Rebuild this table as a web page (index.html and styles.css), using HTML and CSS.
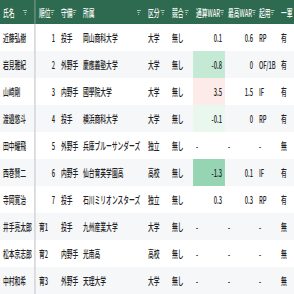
FILE: index.html
```html
<!DOCTYPE html>
<html lang="ja">
<head>
<meta charset="utf-8">
<link rel="stylesheet" href="styles.css">
</head>
<body>
<div class="frame">
<div class="grid">
  <div class="row head">
    <div class="h name"><span>氏名</span><i class="f"></i></div>
    <div class="h"><span>順位</span><i class="f"></i></div>
    <div class="h"><span>守備</span><i class="f"></i></div>
    <div class="h"><span>所属</span><i class="f"></i></div>
    <div class="h"><span>区分</span><i class="f"></i></div>
    <div class="h"><span>競合</span><i class="f"></i></div>
    <div class="h"><span>通算WAR</span><i class="f"></i></div>
    <div class="h"><span>最高WAR</span><i class="f"></i></div>
    <div class="h"><span>起用</span><i class="f"></i></div>
    <div class="h last"><span>一軍</span></div>
  </div>
  <div class="row">
    <div class="c name">近藤弘樹</div><div class="c num">1</div><div class="c">投手</div><div class="c">岡山商科大学</div><div class="c">大学</div><div class="c">無し</div><div class="c num">0.1</div><div class="c num">0.6</div><div class="c">RP</div><div class="c last">有</div>
  </div>
  <div class="row">
    <div class="c name">岩見雅紀</div><div class="c num">2</div><div class="c">外野手</div><div class="c">慶應義塾大学</div><div class="c">大学</div><div class="c">無し</div><div class="c num" style="background:#c4e9d5">-0.8</div><div class="c num">0</div><div class="c">OF/1B</div><div class="c last">有</div>
  </div>
  <div class="row">
    <div class="c name">山崎剛</div><div class="c num">3</div><div class="c">内野手</div><div class="c">國學院大学</div><div class="c">大学</div><div class="c">無し</div><div class="c num" style="background:#fcebe8">3.5</div><div class="c num">1.5</div><div class="c">IF</div><div class="c last">有</div>
  </div>
  <div class="row">
    <div class="c name">渡邉悠斗</div><div class="c num">4</div><div class="c">投手</div><div class="c">横浜商科大学</div><div class="c">大学</div><div class="c">無し</div><div class="c num" style="background:#eaf7ef">-0.1</div><div class="c num">0</div><div class="c">RP</div><div class="c last">有</div>
  </div>
  <div class="row">
    <div class="c name">田中耀飛</div><div class="c num">5</div><div class="c">外野手</div><div class="c">兵庫ブルーサンダーズ</div><div class="c">独立</div><div class="c">無し</div><div class="c">-</div><div class="c">-</div><div class="c">-</div><div class="c last">無</div>
  </div>
  <div class="row">
    <div class="c name">西巻賢二</div><div class="c num">6</div><div class="c">内野手</div><div class="c">仙台育英学園高</div><div class="c">高校</div><div class="c">無し</div><div class="c num" style="background:#95d5b4">-1.3</div><div class="c num">0.1</div><div class="c">IF</div><div class="c last">有</div>
  </div>
  <div class="row">
    <div class="c name">寺岡寛治</div><div class="c num">7</div><div class="c">投手</div><div class="c">石川ミリオンスターズ</div><div class="c">独立</div><div class="c">無し</div><div class="c num">0.3</div><div class="c num">0.3</div><div class="c">RP</div><div class="c last">有</div>
  </div>
  <div class="row">
    <div class="c name">井手亮太郎</div><div class="c">育1</div><div class="c">投手</div><div class="c">九州産業大学</div><div class="c">大学</div><div class="c">無し</div><div class="c">-</div><div class="c">-</div><div class="c">-</div><div class="c last">無</div>
  </div>
  <div class="row">
    <div class="c name">松本京志郎</div><div class="c">育2</div><div class="c">内野手</div><div class="c">光南高</div><div class="c">高校</div><div class="c">無し</div><div class="c">-</div><div class="c">-</div><div class="c">-</div><div class="c last">無</div>
  </div>
  <div class="row">
    <div class="c name">中村和希</div><div class="c">育3</div><div class="c">外野手</div><div class="c">天理大学</div><div class="c">大学</div><div class="c">無し</div><div class="c">-</div><div class="c">-</div><div class="c">-</div><div class="c last">無</div>
  </div>
</div>
</div>
</body>
</html>
```
FILE: styles.css
```css
html, body {
  margin: 0;
  padding: 0;
  overflow: hidden;
  background: #ffffff;
}
.frame {
  width: 294px;
  height: 294px;
  overflow: hidden;
}
.grid {
  width: 534.5px;
  transform: scaleX(0.55);
  transform-origin: 0 0;
  font-family: "Noto Sans CJK JP", "Noto Sans", sans-serif;
  font-size: 10.5px;
  font-weight: 500;
  color: #222222;
}
.row {
  display: grid;
  grid-template-columns: 65.45px 40px 40px 118.18px 43.64px 43.64px 58.18px 56.36px 40px 29.09px;
  height: 27px;
  background: #ffffff;
}
.row:nth-child(odd) {
  background: #f6f7f9;
}
.row.head {
  height: 24px;
  background: #2e6a4f;
  color: #f4f8f6;
}
.h {
  display: flex;
  align-items: center;
  justify-content: space-between;
  padding: 0 8px 0 5.5px;
  white-space: nowrap;
  overflow: hidden;
}
.h.name {
  padding-right: 13px;
  border-right: 3px solid #5f8c77;
}
.f {
  width: 7px;
  height: 5px;
  flex: none;
  background:
    linear-gradient(#a9c7b8, #a9c7b8) 0 0 / 7px 1px no-repeat,
    linear-gradient(#a9c7b8, #a9c7b8) 1.5px 2px / 4px 1px no-repeat,
    linear-gradient(#a9c7b8, #a9c7b8) 2.5px 4px / 2px 1px no-repeat;
}
.c {
  display: flex;
  align-items: center;
  padding: 0 5.5px;
  white-space: nowrap;
  overflow: hidden;
}
.c.name {
  border-right: 3px solid #d6d8db;
}
.c.num {
  justify-content: flex-end;
}
.last {
  padding-right: 0;
}
```
